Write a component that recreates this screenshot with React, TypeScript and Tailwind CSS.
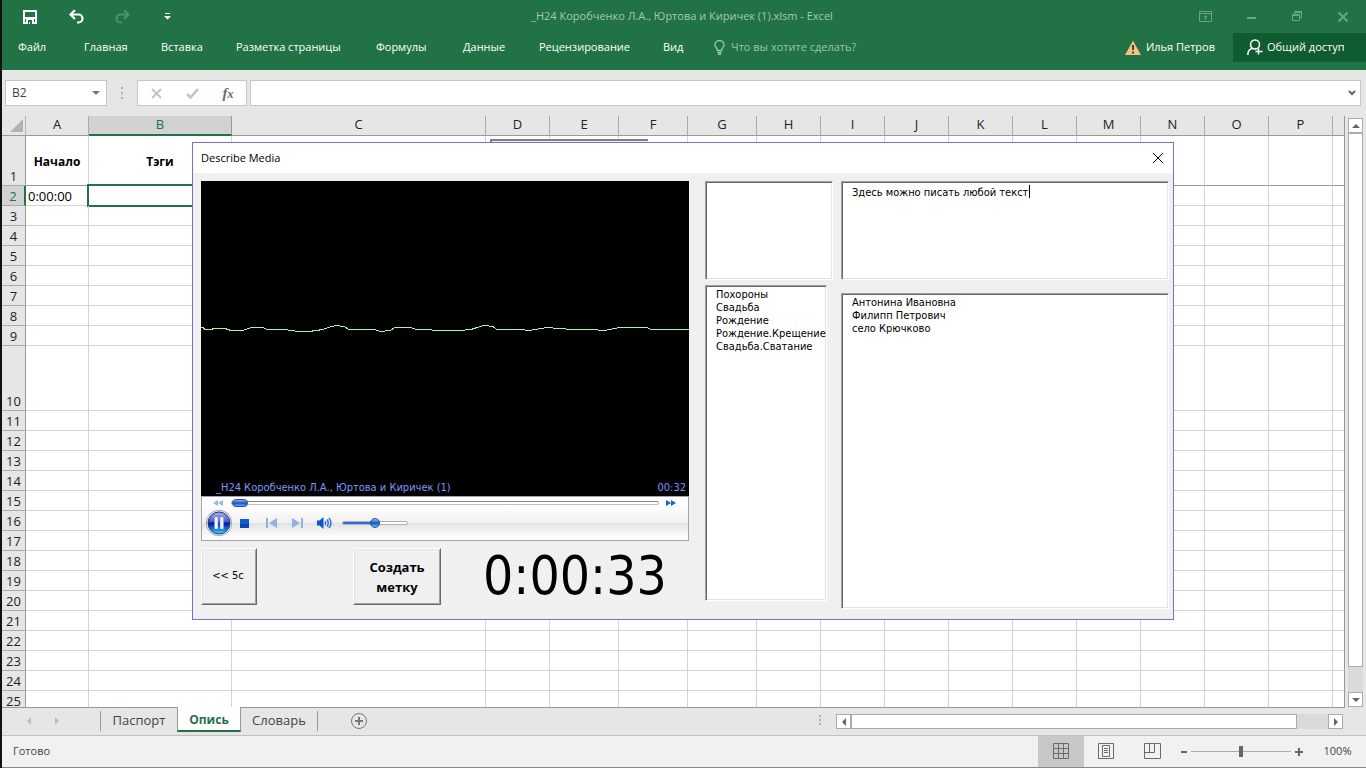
import React, { useState } from 'react';

interface Column {
  name: string;
  width: string;
}

const columns: Column[] = [
  { name: 'A', width: 'w-[63px]' },
  { name: 'B', width: 'w-[143px]' },
  { name: 'C', width: 'w-[254px]' },
  { name: 'D', width: 'w-[64px]' },
  { name: 'E', width: 'w-[69px]' },
  { name: 'F', width: 'w-[69px]' },
  { name: 'G', width: 'w-[69px]' },
  { name: 'H', width: 'w-[64px]' },
  { name: 'I', width: 'w-[64px]' },
  { name: 'J', width: 'w-[64px]' },
  { name: 'K', width: 'w-[64px]' },
  { name: 'L', width: 'w-[64px]' },
  { name: 'M', width: 'w-[64px]' },
  { name: 'N', width: 'w-[64px]' },
  { name: 'O', width: 'w-[64px]' },
  { name: 'P', width: 'w-[64px]' },
  { name: '', width: '' },
];

const rows = Array.from({ length: 25 }, (_, i) => i + 1);

const cells: Record<string, string> = {
  A1: 'Начало',
  B1: 'Тэги',
  A2: '0:00:00',
};

const ribbonTabs = [
  { label: 'Файл', width: 'w-[66px]' },
  { label: 'Главная', width: 'w-[77px]' },
  { label: 'Вставка', width: 'w-[75px]' },
  { label: 'Разметка страницы', width: 'w-[140px]' },
  { label: 'Формулы', width: 'w-[87px]' },
  { label: 'Данные', width: 'w-[76px]' },
  { label: 'Рецензирование', width: 'w-[124px]' },
  { label: 'Вид', width: 'w-[51px]' },
];

const tags = ['Похороны', 'Свадьба', 'Рождение', 'Рождение.Крещение', 'Свадьба.Сватание'];
const names = ['Антонина Ивановна', 'Филипп Петрович', 'село Крючково'];

const uiFont = "font-['Open_Sans','Noto_Sans',sans-serif]";
const formFont = "font-['DejaVu_Sans_Condensed','DejaVu_Sans',sans-serif]";
const sunken =
  'border border-t-[#a0a0a0] border-l-[#a0a0a0] border-r-white border-b-white bg-white shadow-[inset_1px_1px_0_#696969,inset_-1px_-1px_0_#e3e3e3] outline-none';
const raised =
  'border border-t-white border-l-white border-r-[#696969] border-b-[#696969] bg-[#f0f0f0] shadow-[inset_1px_1px_0_#e3e3e3,inset_-1px_-1px_0_#a0a0a0]';

function TitleBar() {
  return (
    <div className="flex h-[33px] items-center text-[#a6c9b4]">
      <div className="flex w-[200px] shrink-0 items-center pl-[21px]">
        <button aria-label="Сохранить" className="w-[46px]">
          <svg width="14" height="14" viewBox="0 0 14 14">
            <path d="M1 1h12v12H1z" fill="none" stroke="#fff" strokeWidth="2" />
            <path d="M1 7h12v2H1zM3 9h8v5H3z" fill="#fff" />
            <path d="M5 10h4v4H7v-2H6v2H5z" fill="#217346" />
          </svg>
        </button>
        <button aria-label="Отменить" className="w-[46px]">
          <svg width="15" height="14" viewBox="0 0 15 14">
            <path d="M6 0 1.500 4.500 6 9M2 4.500h7.500a4 4 0 0 1 0 8H8" fill="none" stroke="#fff" strokeWidth="2.200" />
          </svg>
        </button>
        <button aria-label="Вернуть" className="w-[46px]">
          <svg width="15" height="14" viewBox="0 0 15 14">
            <path d="M9 0 13.500 4.500 9 9M13 4.500H5.500a4 4 0 0 0 0 8H7" fill="none" stroke="#4f9070" strokeWidth="2.200" />
          </svg>
        </button>
        <button aria-label="Настройка панели быстрого доступа" className="pl-[3px]">
          <svg width="7" height="7" viewBox="0 0 7 7">
            <path d="M1 0h5v1H1zM0 3h7L3.500 6.500z" fill="#fff" />
          </svg>
        </button>
      </div>
      <h1 className="flex-1 text-center text-[11px]">_Н24 Коробченко Л.А., Юртова и Киричек (1).xlsm - Excel</h1>
      <div className="flex w-[204px] shrink-0 items-center justify-end gap-[33px] pr-[17px] text-[#6ca286]">
        <button aria-label="Параметры ленты" className="flex">
          <svg width="13" height="11" viewBox="0 0 13 11" fill="none" stroke="currentColor">
            <path d="M.5.5h12v10H.5zM.5 2.500h12M6.500 9V4M4.500 6.500l2-2 2 2" />
          </svg>
        </button>
        <button aria-label="Свернуть" className="flex">
          <svg width="13" height="11" viewBox="0 0 13 11" fill="currentColor">
            <path d="M2 6h9v2H2z" />
          </svg>
        </button>
        <button aria-label="Развернуть" className="flex">
          <svg width="13" height="11" viewBox="0 0 13 11" fill="none" stroke="currentColor">
            <path d="M1.500 3.500h7v6h-7zM1.500 4.500h7M3.500 3V.5h7v6H9M3.500 1.500h7" />
          </svg>
        </button>
        <button aria-label="Закрыть" className="flex">
          <svg width="12" height="12" viewBox="0 0 12 12" fill="none" stroke="currentColor" strokeWidth="2">
            <path d="m1.500 1.500 9 9M10.500 1.500l-9 9" />
          </svg>
        </button>
      </div>
    </div>
  );
}

function Ribbon() {
  return (
    <div className="flex h-[37px] items-start text-[11px] text-white">
      <nav className="flex h-[29px] items-center pl-4">
        {ribbonTabs.map((tab) => (
          <button key={tab.label} className={`${tab.width} shrink-0 text-left whitespace-nowrap`}>
            {tab.label}
          </button>
        ))}
      </nav>
      <label className="flex h-[29px] flex-1 items-center gap-[6px]">
        <svg width="11" height="15" viewBox="0 0 11 15" fill="none" stroke="#9cc3ac" strokeWidth="1.400">
          <path d="M3.500 10.500C3.500 8.500 1 7.500 1 4.800a4.500 4.200 0 0 1 9 0c0 2.700-2.500 3.700-2.500 5.700zM3.500 12.500h4M4 14.300h3" />
        </svg>
        <input
          aria-label="Помощник"
          placeholder="Что вы хотите сделать?"
          className="w-[180px] bg-transparent outline-none placeholder:text-[#9cc3ac]"
        />
      </label>
      <button className="mr-[18px] flex h-[29px] items-center gap-[5px]">
        <svg width="16" height="14" viewBox="0 0 16 14">
          <path d="M8 .5 15.500 14H.5z" fill="#f1c27c" stroke="#f1c27c" strokeLinejoin="round" />
          <path d="M7 4h2v5H7zM7 10.500h2v2H7z" fill="#444" />
        </svg>
        Илья Петров
      </button>
      <button className="flex h-[29px] w-[133px] items-center gap-1 bg-[#0e5c2f] pl-[14px]">
        <svg width="16" height="17" viewBox="0 0 16 17" fill="none" stroke="#fff" strokeWidth="1.500">
          <circle cx="8" cy="5.500" r="4.500" />
          <path d="M.8 16c0-3.500 1.700-6 4.700-6.500M8 9.500l1 .5M11.500 9.500v6M8.500 12.500h7" />
        </svg>
        Общий доступ
      </button>
    </div>
  );
}

function FormulaBar() {
  return (
    <div className="flex h-[46px] shrink-0 items-start pt-[10px] pr-[5px] pl-[3px]">
      <div className="flex h-[26px] w-[102px] items-center justify-between border border-[#c6c6c6] bg-white px-[6px]">
        <input aria-label="Имя" defaultValue="B2" className="w-16 text-xs text-[#444] outline-none" />
        <svg width="8" height="4" viewBox="0 0 8 4">
          <path d="M0 0h8L4 4z" fill="#777" />
        </svg>
      </div>
      <svg width="30" height="26" viewBox="0 0 30 26" fill="#b0b0b0">
        <path d="M14 7h2v2h-2zM14 12h2v2h-2zM14 17h2v2h-2z" />
      </svg>
      <div className="flex h-[26px] w-[110px] items-center border border-[#c6c6c6] bg-white">
        <button aria-label="Отмена" className="flex w-9 justify-center">
          <svg width="11" height="11" viewBox="0 0 11 11" fill="none" stroke="#c3c3c3" strokeWidth="2">
            <path d="m1 1 9 9M10 1l-9 9" />
          </svg>
        </button>
        <button aria-label="Ввод" className="flex w-9 justify-center">
          <svg width="13" height="11" viewBox="0 0 13 11" fill="none" stroke="#c3c3c3" strokeWidth="2.500">
            <path d="m1 6 3.500 3.500L12 1" />
          </svg>
        </button>
        <button
          aria-label="Вставить функцию"
          className="w-9 text-center font-['Liberation_Serif',serif] text-[15px] leading-4 font-bold text-[#6a6a6a] italic"
        >
          f<span className="text-[12px]">x</span>
        </button>
      </div>
      <div className="ml-[3px] flex h-[26px] flex-1 items-center border border-[#c6c6c6] bg-white pr-1">
        <input aria-label="Строка формул" className="flex-1 text-xs outline-none" />
        <svg width="8" height="6" viewBox="0 0 8 6" fill="none" stroke="#666" strokeWidth="2">
          <path d="m1 1 3 3 3-3" />
        </svg>
      </div>
    </div>
  );
}

function rowHeight(row: number) {
  if (row === 1) return 'h-[50px]';
  if (row === 10) return 'h-[65px]';
  return 'h-5';
}

function Sheet() {
  return (
    <div className="relative min-w-0 flex-1 overflow-hidden border-r border-[#999] bg-white">
      <table className="w-full table-fixed border-separate border-spacing-0">
        <thead>
          <tr className="h-5 bg-[#e6e6e6] text-[13px] leading-[17px] text-[#222]">
            <th className="w-6 border-r border-b border-[#b5b5b5] border-b-[#999] p-0">
              <svg className="ml-2" width="13" height="13" viewBox="0 0 13 13">
                <path d="M13 0v13H0z" fill="#b2b2b2" />
              </svg>
            </th>
            {columns.map((col) => (
              <th
                key={col.name}
                className={`${col.width} border-r p-0 align-top font-normal ${
                  col.name === 'B'
                    ? 'border-b-2 border-r-[#999] border-b-[#217346] bg-[#d2d2d2] text-[#217346]'
                    : 'border-b border-r-[#ababab] border-b-[#999] last:border-r-0'
                }`}
              >
                {col.name}
              </th>
            ))}
          </tr>
        </thead>
        <tbody>
          {rows.map((row) => (
            <tr key={row} className={rowHeight(row)}>
              <th
                className={`border-r border-b p-0 text-center align-bottom text-[13px] leading-[17px] font-normal ${
                  row === 2
                    ? 'border-r-2 border-r-[#217346] border-b-[#ababab] bg-[#d2d2d2] text-[#217346]'
                    : 'border-r-[#999] border-b-[#ababab] bg-[#e6e6e6] text-[#222]'
                }`}
              >
                {row}
              </th>
              {columns.map((col) => {
                const id = `${col.name}${row}`;
                return (
                  <td
                    key={id}
                    className={`relative border-r border-b p-0 leading-[17px] whitespace-nowrap last:border-r-0 ${
                      row === 1
                        ? 'border-r-[#d4d4d4] border-b-[#999] pt-[2px] text-center align-middle text-xs font-bold'
                        : 'border-[#d4d4d4] pl-[2px] align-bottom text-[13px]'
                    }`}
                  >
                    {cells[id]}
                    {id === 'B2' && <span className="absolute -inset-x-[2px] -top-[2px] -bottom-[2px] border-2 border-[#217346]" />}
                  </td>
                );
              })}
            </tr>
          ))}
        </tbody>
      </table>
      {/* form button placed on the sheet, mostly hidden by the dialog */}
      <div className="absolute top-[23px] left-[488px] h-8 w-[158px] border-t-2 border-l-2 border-[#808080] bg-[#f0f0f0]" />
    </div>
  );
}

function ArrowIcon({ dir }: { dir: 'up' | 'down' | 'left' | 'right' }) {
  const paths = {
    up: 'M0 6h8L4 2z',
    down: 'M0 2h8L4 6z',
    left: 'M6 0v8L2 4z',
    right: 'M2 0v8l4-4z',
  };
  return (
    <svg width="8" height="8" viewBox="0 0 8 8">
      <path d={paths[dir]} fill="currentColor" />
    </svg>
  );
}

const scrollButton = 'flex shrink-0 items-center justify-center border border-[#ababab] bg-white text-[#666]';

function VerticalScroll() {
  return (
    <div className="flex w-[21px] shrink-0 flex-col items-start pt-[2px] pl-[3px]">
      <button aria-label="Вверх" className={`${scrollButton} h-[15px] w-[15px]`}>
        <ArrowIcon dir="up" />
      </button>
      <div className="flex w-[15px] flex-1 flex-col bg-[#dadada] pb-[25px]">
        <div className="flex-1 border border-[#ababab] bg-white" />
      </div>
      <button aria-label="Вниз" className={`${scrollButton} h-[15px] w-[15px]`}>
        <ArrowIcon dir="down" />
      </button>
    </div>
  );
}

function SheetTabs() {
  return (
    <div className="flex h-7 shrink-0">
      <div className="flex flex-1 border-t border-[#999]">
        <div className="flex w-[98px] items-center gap-5 pb-[2px] pl-[23px] text-[#bdbdbd]">
          <button aria-label="Предыдущий лист" className="flex">
            <ArrowIcon dir="left" />
          </button>
          <button aria-label="Следующий лист" className="flex">
            <ArrowIcon dir="right" />
          </button>
        </div>
        <nav className="flex items-start text-[13px] leading-[18px] text-[#444]">
          <button className="mt-[3px] h-5 w-[77px] border-l border-[#999] pb-[2px]">Паспорт</button>
          <button className="relative -mt-px h-[25px] w-16 border-x border-b-2 border-x-[#999] border-b-[#217346] bg-white pt-[2px] text-xs font-bold text-[#217346]">
            Опись
          </button>
          <button className="mt-[3px] h-5 w-[77px] border-r border-[#999] pb-[2px]">Словарь</button>
        </nav>
        <button aria-label="Новый лист" className="ml-8 flex items-center pb-px">
          <svg width="18" height="18" viewBox="0 0 18 18" fill="none" stroke="#777">
            <circle cx="9" cy="9" r="7.500" />
            <path d="M9 5v8M5 9h8" strokeWidth="2" />
          </svg>
        </button>
        <div className="flex-1" />
        <svg className="mt-[7px]" width="2" height="12" viewBox="0 0 2 12" fill="#b0b0b0">
          <path d="M0 0h2v2H0zM0 4h2v2H0zM0 8h2v2H0z" />
        </svg>
        <div className="mt-[6px] mr-[2px] ml-[15px] flex h-[15px] w-[507px]">
          <button aria-label="Влево" className={`${scrollButton} w-[15px]`}>
            <ArrowIcon dir="left" />
          </button>
          <div className="flex flex-1 bg-[#dadada] pr-[31px]">
            <div className="flex-1 border border-[#ababab] bg-white" />
          </div>
          <button aria-label="Вправо" className={`${scrollButton} w-[15px]`}>
            <ArrowIcon dir="right" />
          </button>
        </div>
      </div>
      <div className="w-[21px]" />
    </div>
  );
}

function StatusBar() {
  const [zoom, setZoom] = useState(100);
  return (
    <footer className="flex h-[33px] shrink-0 items-center border-t border-b border-t-[#c0c0c0] border-b-[#888] bg-[#f1f1f1] text-[11px] text-[#444]">
      <span className="flex-1 pl-[11px]">Готово</span>
      <button aria-label="Обычный" className="flex h-full w-[46px] items-center justify-center bg-[#c8c8c8] pr-px">
        <svg width="17" height="17" viewBox="0 0 17 17" fill="none" stroke="#6a6a6a">
          <path d="M1.500.5h15v15h-15zM6.500.5v15M11.500.5v15M1.500 5.500h15M1.500 10.500h15" />
        </svg>
      </button>
      <button aria-label="Разметка страницы" className="flex h-full w-[46px] items-center justify-center pr-px">
        <svg width="17" height="17" viewBox="0 0 17 17" fill="none" stroke="#6a6a6a">
          <path d="M.5.5h15v15H.5zM4.500 2.500h7v11h-7zM6 5.500h4M6 7.500h4M6 9.500h4" />
        </svg>
      </button>
      <button aria-label="Страничный режим" className="flex h-full w-[46px] items-center justify-center pr-px">
        <svg width="17" height="17" viewBox="0 0 17 17" fill="none" stroke="#6a6a6a">
          <path d="M.5.5h16v15H.5zM5.500.5v9M10.500.5v9M.5 9.500h10" />
        </svg>
      </button>
      <button aria-label="Уменьшить" className="ml-[5px]">
        <svg width="6" height="10" viewBox="0 0 6 10" fill="#666">
          <path d="M0 4h6v2H0z" />
        </svg>
      </button>
      <input
        type="range"
        aria-label="Масштаб"
        min={10}
        max={190}
        value={zoom}
        onChange={(e) => setZoom(Number(e.target.value))}
        className="mx-1 h-3 w-[100px] appearance-none bg-transparent [&::-webkit-slider-runnable-track]:h-px [&::-webkit-slider-runnable-track]:bg-[#ababab] [&::-webkit-slider-thumb]:-mt-[5px] [&::-webkit-slider-thumb]:h-[11px] [&::-webkit-slider-thumb]:w-1 [&::-webkit-slider-thumb]:appearance-none [&::-webkit-slider-thumb]:bg-[#666]"
      />
      <button aria-label="Увеличить">
        <svg width="8" height="10" viewBox="0 0 8 10" fill="#666">
          <path d="M0 4h8v2H0zM3 1h2v8H3z" />
        </svg>
      </button>
      <button className="mr-[2px] ml-2 w-[53px] text-center">{zoom}%</button>
    </footer>
  );
}

function Waveform() {
  return (
    <svg className="block w-full" height="10" viewBox="0 0 488 10" preserveAspectRatio="none" fill="none" shapeRendering="crispEdges">
      <path
        d="M0 2.500H2L4 4.500H10L13 3.500H24L30 5.500H42L50 2.500H62L66 4.500H84L97 6.500H108L122 4.500L127 2.500L135 .5L143 1.500L148 4.500H173L180 6.500L189 5.500L194 2.500H209L216 4.500H225L236 5.500H258L270 4.500L276 2.500L283 .5L292 1.500L296 4.500H320L328 5.500L340 3.500L346 2.500L358 3.500L372 4.500H390L404 5.500L418 2.500H446L450 4.500H488"
        stroke="#a8f5a0"
      />
    </svg>
  );
}

function Player() {
  return (
    <section className="w-[488px]">
      <div className="flex h-[315px] flex-col justify-between bg-black pt-36 text-[11px] leading-[13px] text-[#7f96f8]">
        <Waveform />
        <div className="flex justify-between pr-[3px] pb-[2px] pl-[15px]">
          <span>_Н24 Коробченко Л.А., Юртова и Киричек (1)</span>
          <span>00:32</span>
        </div>
      </div>
      <div className="h-[45px] border border-[#a6a6a6] bg-[linear-gradient(#fff_20%,#f1f1f1_60%,#e2e2e2_60%,#fff_95%)]">
        <div className="flex h-3 items-center px-[11px]">
          <button aria-label="Назад" className="flex">
            <svg width="11" height="6" viewBox="0 0 11 6" fill="#9ab8e6">
              <path d="M5 0v6L0 3zM10 0v6L5 3z" />
            </svg>
          </button>
          <input
            type="range"
            aria-label="Позиция"
            min={0}
            max={100}
            defaultValue={0}
            className="mr-[7px] ml-[7px] h-2 flex-1 appearance-none bg-transparent [&::-webkit-slider-runnable-track]:h-1 [&::-webkit-slider-runnable-track]:rounded-full [&::-webkit-slider-runnable-track]:border [&::-webkit-slider-runnable-track]:border-t-[#888] [&::-webkit-slider-runnable-track]:border-b-[#c0c0c0] [&::-webkit-slider-runnable-track]:border-x-[#aaa] [&::-webkit-slider-runnable-track]:bg-white [&::-webkit-slider-thumb]:-mt-[3px] [&::-webkit-slider-thumb]:h-2 [&::-webkit-slider-thumb]:w-4 [&::-webkit-slider-thumb]:appearance-none [&::-webkit-slider-thumb]:rounded-full [&::-webkit-slider-thumb]:border [&::-webkit-slider-thumb]:border-[#2a4a9a] [&::-webkit-slider-thumb]:bg-linear-to-b [&::-webkit-slider-thumb]:from-[#8fb4f0] [&::-webkit-slider-thumb]:via-[#1a4fc0] [&::-webkit-slider-thumb]:to-[#5fb0f5]"
          />
          <button aria-label="Вперёд" className="flex">
            <svg width="11" height="6" viewBox="0 0 11 6" fill="#1464d2">
              <path d="M0 0v6l5-3zM5 0v6l5-3z" />
            </svg>
          </button>
        </div>
        <div className="flex h-7 items-center pl-[3px]">
          <button aria-label="Пауза" className="flex">
            <svg width="28" height="28" viewBox="0 0 28 28">
              <defs>
                <linearGradient id="pauseFill" x1="0" y1="0" x2="0" y2="1">
                  <stop offset="0" stopColor="#a5b4ea" />
                  <stop offset=".45" stopColor="#4458bd" />
                  <stop offset=".5" stopColor="#07149a" />
                  <stop offset=".8" stopColor="#1180e0" />
                  <stop offset="1" stopColor="#5be0ff" />
                </linearGradient>
              </defs>
              <circle cx="14" cy="14" r="12.800" fill="#e4e6ee" stroke="#a9adba" />
              <circle cx="14" cy="14" r="11" fill="url(#pauseFill)" stroke="#26358c" />
              <path d="M9.500 8h3.500v12H9.500zM15 8h3.500v12H15z" fill="#eef2ff" stroke="#8fa0d8" strokeWidth=".6" />
            </svg>
          </button>
          <button aria-label="Стоп" className="ml-[7px] flex">
            <svg width="9" height="9" viewBox="0 0 9 9">
              <path d="M0 0h9v9H0z" fill="#0c5fd0" />
              <path d="M0 5h9v4H0z" fill="#0a46b4" />
            </svg>
          </button>
          <button aria-label="Предыдущая" className="ml-[17px] flex">
            <svg width="12" height="10" viewBox="0 0 12 10" fill="#8fb1e4">
              <path d="M0 0h2v10H0zM11 0v10L3 5z" />
            </svg>
          </button>
          <button aria-label="Следующая" className="ml-[14px] flex">
            <svg width="12" height="10" viewBox="0 0 12 10" fill="#8fb1e4">
              <path d="M9 0h2v10H9zM0 0v10l8-5z" />
            </svg>
          </button>
          <button aria-label="Звук" className="ml-[13px] flex">
            <svg width="16" height="12" viewBox="0 0 16 12">
              <path d="M0 3.500h2.500L6.500 0v12l-4-3.500H0z" fill="#0d55c8" />
              <path d="M8 4.300q1.300 1.700 0 3.400M9.800 2.500q3 3.500 0 7M11.800 1q4.500 5 0 10" fill="none" stroke="#2f74d6" strokeWidth="1.500" />
            </svg>
          </button>
          <input
            type="range"
            aria-label="Громкость"
            min={0}
            max={100}
            defaultValue={50}
            className="ml-[9px] h-3 w-[66px] appearance-none bg-transparent [&::-webkit-slider-runnable-track]:h-1 [&::-webkit-slider-runnable-track]:rounded-full [&::-webkit-slider-runnable-track]:border [&::-webkit-slider-runnable-track]:border-[#b0b0b0] [&::-webkit-slider-runnable-track]:bg-linear-to-r [&::-webkit-slider-runnable-track]:from-[#2a6fe0] [&::-webkit-slider-runnable-track]:from-50% [&::-webkit-slider-runnable-track]:to-white [&::-webkit-slider-runnable-track]:to-50% [&::-webkit-slider-thumb]:-mt-1 [&::-webkit-slider-thumb]:h-[10px] [&::-webkit-slider-thumb]:w-[10px] [&::-webkit-slider-thumb]:appearance-none [&::-webkit-slider-thumb]:rounded-full [&::-webkit-slider-thumb]:border [&::-webkit-slider-thumb]:border-[#2a4a9a] [&::-webkit-slider-thumb]:bg-linear-to-b [&::-webkit-slider-thumb]:from-[#a0c0f5] [&::-webkit-slider-thumb]:via-[#1a4fc0] [&::-webkit-slider-thumb]:to-[#5fd0ff]"
          />
        </div>
      </div>
      <div className="mt-[7px] flex items-start">
        <button className={`${raised} h-[57px] w-14 pr-[2px] text-[11px]`}>&lt;&lt; 5с</button>
        <button className={`${raised} ml-24 h-[57px] w-[88px] ${uiFont} text-[13px] leading-5 font-bold`}>
          Создать метку
        </button>
        <output className="ml-[42px] text-[53px] leading-[55px]">0:00:33</output>
      </div>
    </section>
  );
}

function DescribeMediaDialog() {
  const [note, setNote] = useState('Здесь можно писать любой текст');

  return (
    <div
      role="dialog"
      aria-labelledby="dialog-title"
      className={`absolute top-[142px] left-[190px] w-[982px] border border-[#7571d1] bg-[#f0f0f0] ${formFont} text-[11px] text-black`}
    >
      <div className={`flex h-[30px] items-center justify-between bg-white pr-[9px] pl-2 ${uiFont} text-[11px]`}>
        <h2 id="dialog-title">Describe Media</h2>
        <button aria-label="Закрыть окно" className="flex">
          <svg width="12" height="12" viewBox="0 0 12 12" fill="none" stroke="#000">
            <path d="m1 1 10 10M11 1 1 11" />
          </svg>
        </button>
      </div>
      <div className="flex pt-2 pr-1 pb-[10px] pl-2">
        <Player />
        <div className="ml-4 flex w-32 flex-col gap-[5px]">
          <textarea aria-label="Выбранные тэги" className={`${sunken} block h-[99px] resize-none`} />
          <select multiple aria-label="Тэги" className={`${sunken} h-[316px] w-[122px] overflow-hidden py-[2px]`}>
            {tags.map((tag) => (
              <option key={tag} className="min-h-0 py-0 pr-0 pl-[10px] text-[11px] leading-[13px]">
                {tag}
              </option>
            ))}
          </select>
        </div>
        <div className="relative ml-2 flex flex-1 flex-col gap-[13px]">
          <textarea
            aria-label="Описание"
            value={note}
            onChange={(e) => setNote(e.target.value)}
            className={`${sunken} block h-[99px] resize-none py-1 pl-[10px] leading-[13px]`}
          />
          <span className="absolute top-1 left-[188px] h-[13px] w-px bg-black" />
          <select multiple aria-label="Имена и места" className={`${sunken} h-[316px] overflow-hidden py-[2px]`}>
            {names.map((name) => (
              <option key={name} className="min-h-0 py-0 pr-0 pl-[10px] text-[11px] leading-[13px]">
                {name}
              </option>
            ))}
          </select>
        </div>
      </div>
    </div>
  );
}

export default function App() {
  return (
    <main className={`relative flex h-screen flex-col overflow-hidden border-l-2 border-[#111] bg-[#e6e6e6] ${uiFont}`}>
      <header className="shrink-0 bg-[#217346]">
        <TitleBar />
        <Ribbon />
      </header>
      <FormulaBar />
      <div className="flex min-h-0 flex-1">
        <Sheet />
        <VerticalScroll />
      </div>
      <SheetTabs />
      <StatusBar />
      <DescribeMediaDialog />
    </main>
  );
}
